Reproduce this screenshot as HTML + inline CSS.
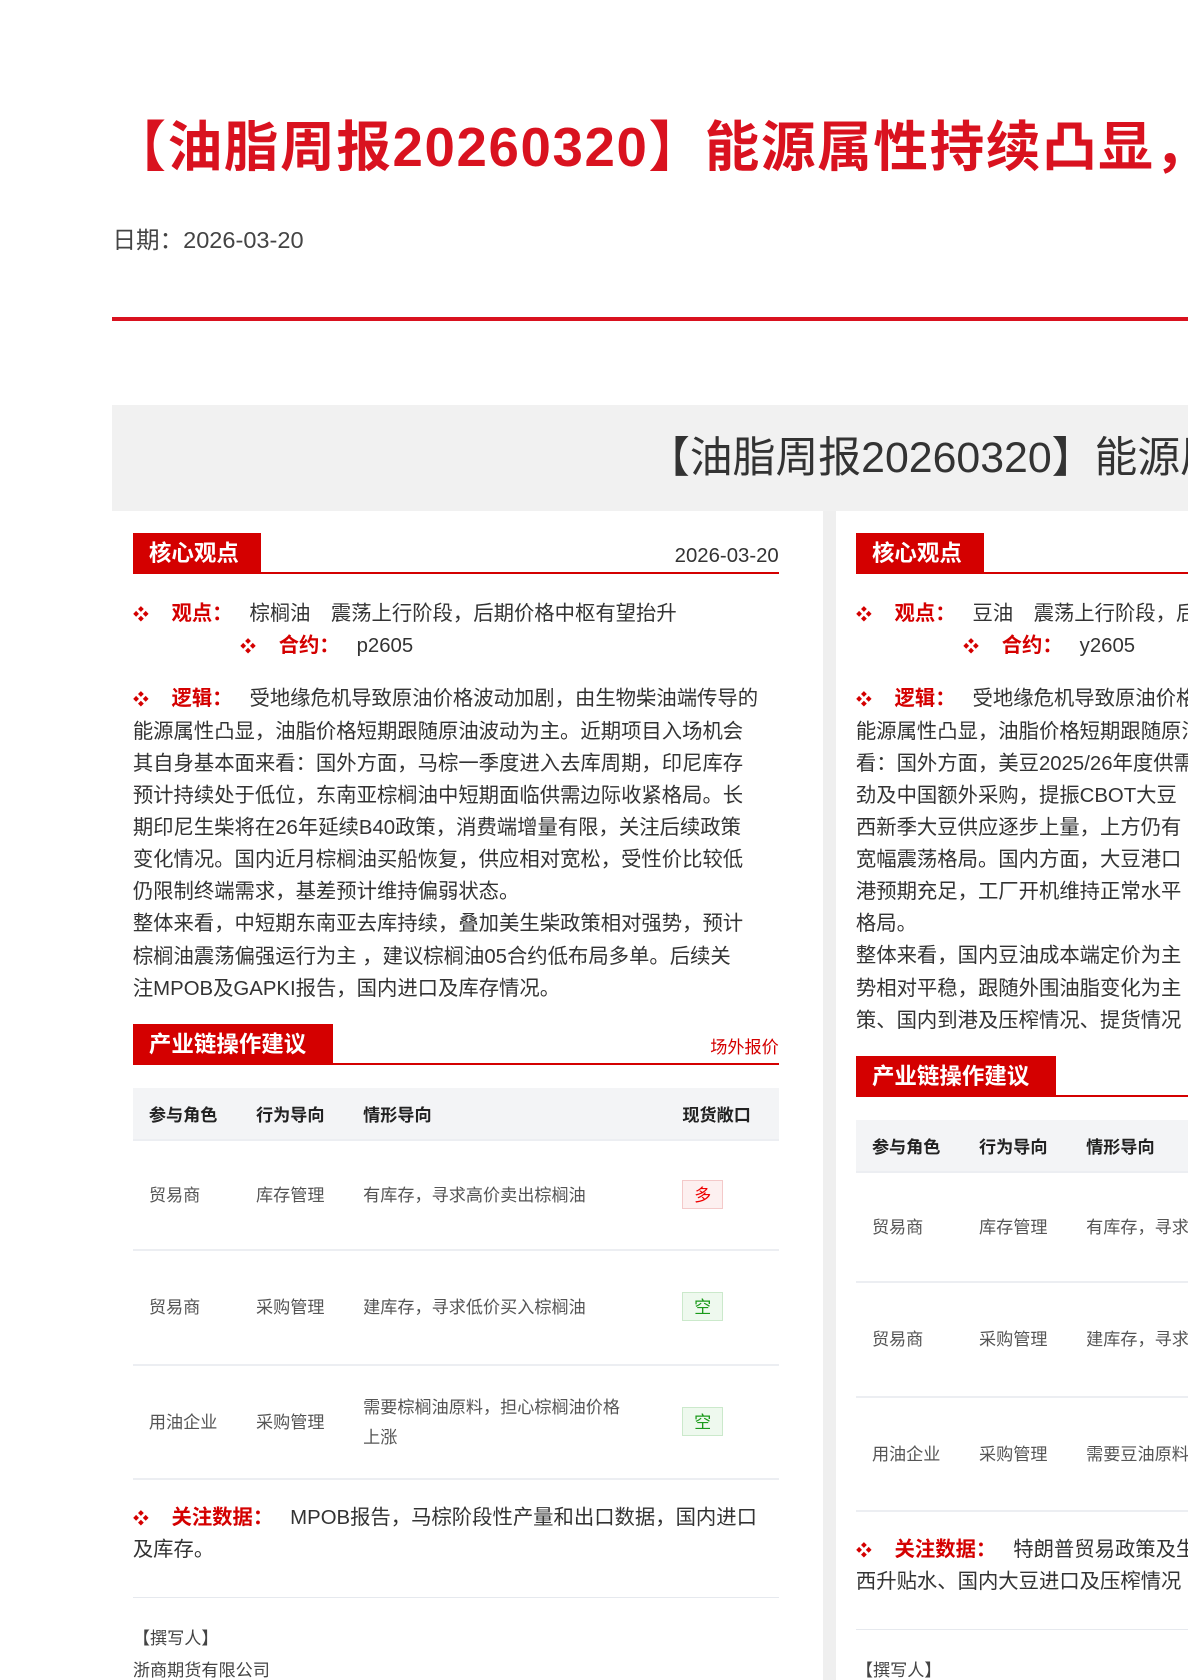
<!DOCTYPE html>
<html><head><meta charset="utf-8">
<style>
html,body{margin:0;padding:0;background:#fff;overflow:hidden;}
body{width:1109px;height:1568px;overflow:hidden;zoom:1.0712;position:relative;font-family:"Liberation Sans","Noto Sans CJK SC",sans-serif;color:#333;}
.abs{position:absolute;white-space:nowrap;}
.title{left:104px;top:104px;font-size:51px;font-weight:bold;color:#d9121f;letter-spacing:1.5px;line-height:70px;}
.date{left:105px;top:206px;font-size:22px;color:#444;}
.redline{left:105px;top:296px;width:1004px;height:4px;background:#d9121f;}
.banner{left:105px;top:378px;width:1004px;height:99px;background:#f1f1f1;overflow:hidden;}
.banner span{position:absolute;left:499px;top:25px;font-size:40px;color:#333;line-height:50px;}
.strip{left:768px;top:477px;width:12px;height:1100px;background:#efefef;}
.card{position:absolute;top:482px;width:603px;}
.clip{position:absolute;left:780px;top:477px;width:329px;height:1100px;overflow:hidden;}
.tab{position:absolute;height:37px;background:#d40000;color:#fff;font-size:21px;line-height:39px;padding:0 15px;box-sizing:border-box;font-weight:bold;}
.tabline{position:absolute;height:2px;background:#d40000;width:603px;left:0;}
.t19{font-size:19px;line-height:30px;color:#333;}
.red{color:#d40000;font-weight:bold;}
.dia{color:#d40000;font-size:15px;}
.row{position:absolute;left:0;white-space:nowrap;}
table{border-collapse:collapse;position:absolute;left:0;width:603px;font-size:16px;}
th{background:#f3f4f6;text-align:left;font-weight:bold;color:#222;height:47px;padding:0 0 0 15px;border-bottom:2px solid #eceef2;}
td{color:#555;padding:0 0 0 15px;border-bottom:2px solid #eceef2;line-height:28px;}
.badge{display:inline-block;width:38px;height:27px;line-height:27px;text-align:center;box-sizing:border-box;font-size:16px;}
.duo{background:#fdf0f0;border:1px solid #f4c9c9;color:#e00;}
.kong{background:#eef9ee;border:1px solid #cbe9cb;color:#1a9a1a;}
.div{position:absolute;left:0;width:603px;height:1px;background:#e6e9ee;}
</style></head><body>
<div class="abs" style="left:0;top:0;width:1109px;height:200px;overflow:hidden;"><div class="abs title">【油脂周报20260320】能源属性持续凸显，油脂价格</div></div>
<div class="abs date">日期：2026-03-20</div>
<div class="abs redline"></div>
<div class="abs banner"><span>【油脂周报20260320】能源属性持续凸显</span></div>
<div class="abs strip"></div>

<!-- LEFT CARD -->
<div class="card" style="left:124px;">
  <div class="tab" style="left:0;top:16px;width:120px;">核心观点</div>
  <div class="tabline" style="top:52px;"></div>
  <div class="row t19" style="right:0;left:auto;top:22px;">2026-03-20</div>
  <div class="row t19" style="top:76px;"><span class="dia">❖</span>&nbsp;&nbsp;&nbsp;&nbsp;<span class="red">观点：</span>&nbsp;&nbsp;&nbsp;棕榈油　震荡上行阶段，后期价格中枢有望抬升</div>
  <div class="row t19" style="top:106px;left:100px;"><span class="dia">❖</span>&nbsp;&nbsp;&nbsp;&nbsp;<span class="red">合约：</span>&nbsp;&nbsp;&nbsp;p2605</div>
  <div class="row t19" style="top:156px;"><span class="dia">❖</span>&nbsp;&nbsp;&nbsp;&nbsp;<span class="red">逻辑：</span>&nbsp;&nbsp;&nbsp;受地缘危机导致原油价格波动加剧，由生物柴油端传导的</div>
  <div class="row t19" style="top:186px;">能源属性凸显，油脂价格短期跟随原油波动为主。近期项目入场机会</div>
  <div class="row t19" style="top:216px;">其自身基本面来看：国外方面，马棕一季度进入去库周期，印尼库存</div>
  <div class="row t19" style="top:246px;">预计持续处于低位，东南亚棕榈油中短期面临供需边际收紧格局。长</div>
  <div class="row t19" style="top:276px;">期印尼生柴将在26年延续B40政策，消费端增量有限，关注后续政策</div>
  <div class="row t19" style="top:306px;">变化情况。国内近月棕榈油买船恢复，供应相对宽松，受性价比较低</div>
  <div class="row t19" style="top:336px;">仍限制终端需求，基差预计维持偏弱状态。</div>
  <div class="row t19" style="top:366px;">整体来看，中短期东南亚去库持续，叠加美生柴政策相对强势，预计</div>
  <div class="row t19" style="top:396px;">棕榈油震荡偏强运行为主 ，建议棕榈油05合约低布局多单。后续关</div>
  <div class="row t19" style="top:426px;">注MPOB及GAPKI报告，国内进口及库存情况。</div>
  <div class="tab" style="left:0;top:474px;width:187px;">产业链操作建议</div>
  <div class="tabline" style="top:510px;"></div>
  <div class="row" style="right:0;left:auto;top:482px;font-size:16px;color:#d40000;">场外报价</div>
  <table style="top:534px;">
    <tr><th style="width:85px">参与角色</th><th style="width:85px">行为导向</th><th>情形导向</th><th style="width:90px">现货敞口</th></tr>
    <tr style="height:103px"><td>贸易商</td><td>库存管理</td><td>有库存，寻求高价卖出棕榈油</td><td><span class="badge duo">多</span></td></tr>
    <tr style="height:107px"><td>贸易商</td><td>采购管理</td><td>建库存，寻求低价买入棕榈油</td><td><span class="badge kong">空</span></td></tr>
    <tr style="height:107px"><td>用油企业</td><td>采购管理</td><td>需要棕榈油原料，担心棕榈油价格<br>上涨</td><td><span class="badge kong">空</span></td></tr>
  </table>
  <div class="row t19" style="top:920px;"><span class="dia">❖</span>&nbsp;&nbsp;&nbsp;&nbsp;<span class="red">关注数据：</span>&nbsp;&nbsp;&nbsp;MPOB报告，马棕阶段性产量和出口数据，国内进口</div>
  <div class="row t19" style="top:950px;">及库存。</div>
  <div class="div" style="top:1009px;"></div>
  <div class="row" style="top:1034px;font-size:16px;color:#444;">【撰写人】</div>
  <div class="row" style="top:1064px;font-size:16px;color:#444;">浙商期货有限公司</div>
</div>

<!-- RIGHT CARD -->
<div class="clip">
<div class="card" style="left:19px;top:5px;">
  <div class="tab" style="left:0;top:16px;width:120px;">核心观点</div>
  <div class="tabline" style="top:52px;"></div>
  <div class="row t19" style="top:76px;"><span class="dia">❖</span>&nbsp;&nbsp;&nbsp;&nbsp;<span class="red">观点：</span>&nbsp;&nbsp;&nbsp;豆油　震荡上行阶段，后期价格中枢有望抬升</div>
  <div class="row t19" style="top:106px;left:100px;"><span class="dia">❖</span>&nbsp;&nbsp;&nbsp;&nbsp;<span class="red">合约：</span>&nbsp;&nbsp;&nbsp;y2605</div>
  <div class="row t19" style="top:156px;"><span class="dia">❖</span>&nbsp;&nbsp;&nbsp;&nbsp;<span class="red">逻辑：</span>&nbsp;&nbsp;&nbsp;受地缘危机导致原油价格波动加剧</div>
  <div class="row t19" style="top:186px;">能源属性凸显，油脂价格短期跟随原油波动为主</div>
  <div class="row t19" style="top:216px;">看：国外方面，美豆2025/26年度供需</div>
  <div class="row t19" style="top:246px;">劲及中国额外采购，提振CBOT大豆</div>
  <div class="row t19" style="top:276px;">西新季大豆供应逐步上量，上方仍有</div>
  <div class="row t19" style="top:306px;">宽幅震荡格局。国内方面，大豆港口</div>
  <div class="row t19" style="top:336px;">港预期充足，工厂开机维持正常水平</div>
  <div class="row t19" style="top:366px;">格局。</div>
  <div class="row t19" style="top:396px;">整体来看，国内豆油成本端定价为主</div>
  <div class="row t19" style="top:426px;">势相对平稳，跟随外围油脂变化为主</div>
  <div class="row t19" style="top:456px;">策、国内到港及压榨情况、提货情况</div>
  <div class="tab" style="left:0;top:504px;width:187px;">产业链操作建议</div>
  <div class="tabline" style="top:540px;"></div>
  <table style="top:564px;">
    <tr><th style="width:85px">参与角色</th><th style="width:85px">行为导向</th><th>情形导向</th><th style="width:90px">现货敞口</th></tr>
    <tr style="height:103px"><td>贸易商</td><td>库存管理</td><td>有库存，寻求高价卖出豆油</td><td></td></tr>
    <tr style="height:107px"><td>贸易商</td><td>采购管理</td><td>建库存，寻求低价买入豆油</td><td></td></tr>
    <tr style="height:107px"><td>用油企业</td><td>采购管理</td><td>需要豆油原料，担心豆油价格上涨</td><td></td></tr>
  </table>
  <div class="row t19" style="top:950px;"><span class="dia">❖</span>&nbsp;&nbsp;&nbsp;&nbsp;<span class="red">关注数据：</span>&nbsp;&nbsp;&nbsp;特朗普贸易政策及生柴政策</div>
  <div class="row t19" style="top:980px;">西升贴水、国内大豆进口及压榨情况</div>
  <div class="div" style="top:1039px;"></div>
  <div class="row" style="top:1064px;font-size:16px;color:#444;">【撰写人】</div>
</div>
</div>
</body></html>
